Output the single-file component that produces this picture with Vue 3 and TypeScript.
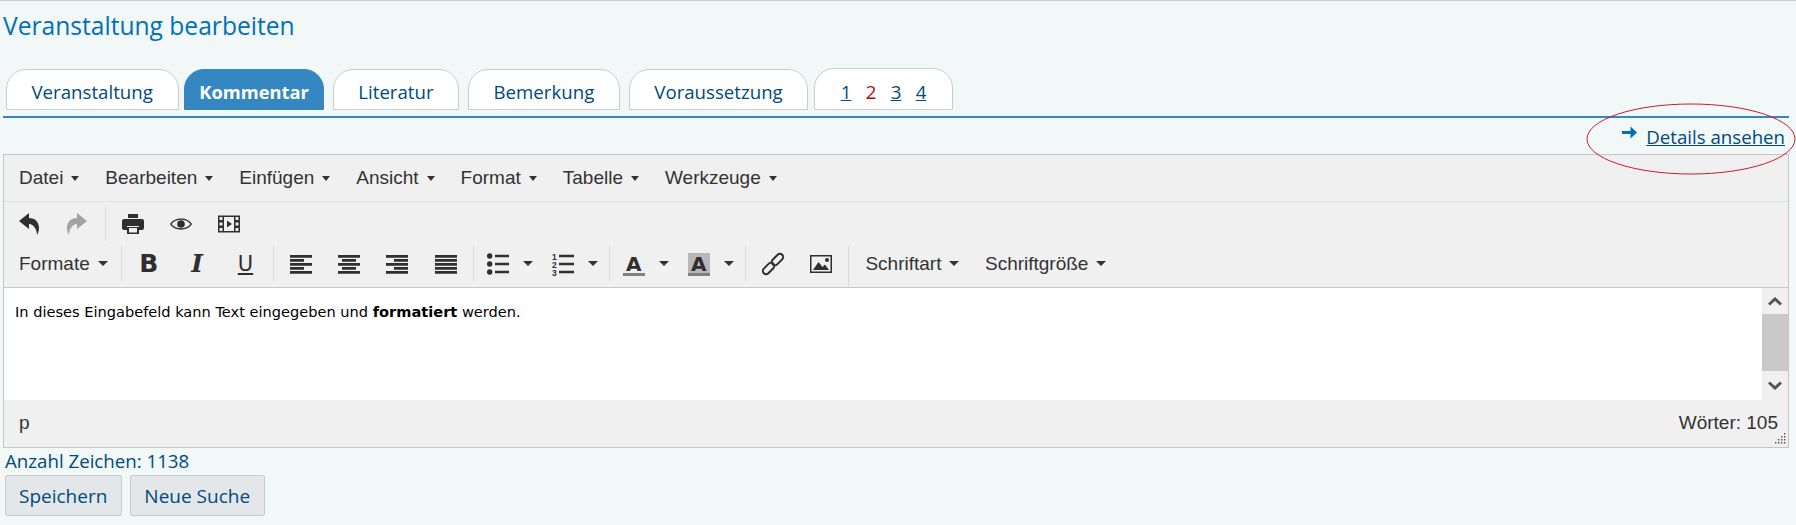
<script setup lang="ts">
type Btn = { icon?: string; glyph?: string; glyphClass?: string; caret?: boolean; label?: string; fill?: string; kind?: string };

const bars = (rows: [number, number][]): string => {
  const top = 2;
  return rows.map(([x, w], i) => `M${x} ${top + i * 4}h${w}v2.8h${-w}z`).join(' ');
};
const lines = (x: number): string => [3, 11, 19].map((y) => `M${x} ${y - 1.3}h${22 - x}v2.6h${x - 22}z`).join(' ');

const paths: Record<string, string> = {
  undo: 'M1 8L11 0V5C17 5 21 9 21 15C21 18 20 20 19 22C19 17 16 11 11 11V16Z',
  redo: 'M21 8L11 0V5C5 5 1 9 1 15C1 18 2 20 3 22C3 17 6 11 11 11V16Z',
  print: 'M6 1h10v4H6z M2 6h18a2 2 0 0 1 2 2v7a2 2 0 0 1-2 2h-3v-4H5v4H2a2 2 0 0 1-2-2V8a2 2 0 0 1 2-2z M5 14h12v7H5z M7 15h8v4.5H7z',
  eye: 'M0 11C4 3.5 18 3.5 22 11C18 18.5 4 18.5 0 11Z M1.6 11C5.5 5.2 16.5 5.2 20.4 11C16.5 16.8 5.5 16.8 1.6 11Z M11 7.2a3.8 3.8 0 1 0 0 7.6a3.8 3.8 0 1 0 0-7.6z',
  film: 'M0 2.5h22v17H0z M1.5 4h3v3h-3z M1.5 9.5h3v3h-3z M1.5 15h3v3h-3z M17.5 4h3v3h-3z M17.5 9.5h3v3h-3z M17.5 15h3v3h-3z M6 4h10v14H6z M9 7.5l5 3.5l-5 3.5z',
  left: bars([[0, 22], [0, 14], [0, 22], [0, 14], [0, 22]]),
  center: bars([[0, 22], [4, 14], [0, 22], [4, 14], [0, 22]]),
  right: bars([[0, 22], [8, 14], [0, 22], [8, 14], [0, 22]]),
  justify: bars([[0, 22], [0, 22], [0, 22], [0, 22], [0, 22]]),
  bullist: 'M2.7 .3a2.7 2.7 0 1 0 0 5.4a2.7 2.7 0 1 0 0-5.4z M2.7 8.3a2.7 2.7 0 1 0 0 5.4a2.7 2.7 0 1 0 0-5.4z M2.7 16.3a2.7 2.7 0 1 0 0 5.4a2.7 2.7 0 1 0 0-5.4z ' + lines(8),
  numlist: lines(7),
  image: 'M0 2h22v18H0z M1.5 3.5h19v15h-19z M3 17l5.5-8l4 5l2.5-2.5l4 5.5z M17 5a2 2 0 1 0 0 4a2 2 0 1 0 0-4z',
};

const menus = ['Datei', 'Bearbeiten', 'Einfügen', 'Ansicht', 'Format', 'Tabelle', 'Werkzeuge'];
const tabs = [
  { label: 'Veranstaltung', cls: 'lead' },
  { label: 'Kommentar', cls: 'active' },
  { label: 'Literatur', cls: 'wide' },
  { label: 'Bemerkung', cls: 'wide' },
  { label: 'Voraussetzung', cls: 'wide' },
];
const pages = [
  { n: '1', red: false },
  { n: '2', red: true },
  { n: '3', red: false },
  { n: '4', red: false },
];

const rowOne: Btn[][] = [
  [{ icon: 'undo' }, { icon: 'redo', fill: 'muted' }],
  [{ icon: 'print' }, { icon: 'eye' }, { icon: 'film' }],
];
const rowTwo: { cls: string; items: Btn[] }[] = [
  { cls: 'first', items: [{ label: 'Formate', caret: true }] },
  { cls: '', items: [
    { glyph: 'B', glyphClass: 'g-bold' },
    { glyph: 'I', glyphClass: 'g-italic' },
    { glyph: 'U', glyphClass: 'g-under' },
  ] },
  { cls: '', items: [{ icon: 'left' }, { icon: 'center' }, { icon: 'right' }, { icon: 'justify' }] },
  { cls: 'split', items: [{ icon: 'bullist', caret: true }, { icon: 'numlist', caret: true, kind: 'nums' }] },
  { cls: 'split', items: [
    { glyph: 'A', glyphClass: 'g-fore', caret: true },
    { glyph: 'A', glyphClass: 'g-back', caret: true },
  ] },
  { cls: '', items: [{ kind: 'link' }, { icon: 'image' }] },
  { cls: 'tall', items: [{ label: 'Schriftart', caret: true }, { label: 'Schriftgröße', caret: true }] },
];
</script>

<template>
  <div class="page">
    <h1 class="title">Veranstaltung bearbeiten</h1>

    <nav class="tabs">
      <a v-for="t in tabs" :key="t.label" class="tab" :class="t.cls">{{ t.label }}</a>
      <div class="tab pages">
        <a v-for="p in pages" :key="p.n" class="num" :class="{ red: p.red }">{{ p.n }}</a>
      </div>
    </nav>

    <div class="details">
      <svg class="arrow" viewBox="0 0 15 13" width="15" height="13">
        <path d="M0 5h8.5V0.5L15 6.5L8.5 12.5V8H0z" />
      </svg>
      <a class="details-link">Details ansehen</a>
      <svg class="ellipse" viewBox="0 0 210 72" width="210" height="72">
        <ellipse cx="105" cy="36" rx="104" ry="35" />
      </svg>
    </div>

    <section class="editor">
      <div class="menubar">
        <span v-for="m in menus" :key="m" class="menu">{{ m }}<i class="caret small" /></span>
      </div>

      <div class="toolbar">
        <div class="row one">
          <div v-for="(g, i) in rowOne" :key="i" class="group">
            <span v-for="b in g" :key="b.icon" class="btn">
              <svg class="ico" :class="b.fill" viewBox="0 0 22 22" width="22" height="22">
                <path fill-rule="evenodd" :d="paths[b.icon as string]" />
              </svg>
            </span>
          </div>
        </div>

        <div class="row two">
          <div v-for="(g, i) in rowTwo" :key="i" class="group" :class="g.cls">
            <span v-for="(b, j) in g.items" :key="j" class="btn" :class="{ 'has-label': b.label, 'has-caret': b.caret && !b.label }">
              <template v-if="b.label">{{ b.label }}</template>

              <span v-else-if="b.glyph" class="glyph" :class="b.glyphClass">{{ b.glyph }}</span>

              <svg v-else-if="b.kind === 'link'" class="ico" viewBox="0 0 22 22" width="22" height="22">
                <g class="chain" transform="rotate(-45 11 11)">
                  <rect x="-2" y="7.8" width="13.5" height="6.4" rx="3.2" />
                  <rect x="10.5" y="7.8" width="13.5" height="6.4" rx="3.2" />
                </g>
              </svg>

              <svg v-else class="ico" viewBox="0 0 22 22" width="22" height="22">
                <path fill-rule="evenodd" :d="paths[b.icon as string]" />
                <template v-if="b.kind === 'nums'">
                  <text class="mini" x="0" y="6.5">1</text>
                  <text class="mini" x="0" y="14.5">2</text>
                  <text class="mini" x="0" y="22.5">3</text>
                </template>
              </svg>

              <i v-if="b.caret" class="caret" />
            </span>
          </div>
        </div>
      </div>

      <div class="body">
        <p class="content">In dieses Eingabefeld kann Text eingegeben und <strong>formatiert</strong> werden.</p>
        <div class="scrollbar">
          <span class="sb-btn top">
            <svg viewBox="0 0 14 9" width="14" height="9"><path d="M1 7.5L7 2l6 5.5" /></svg>
          </span>
          <span class="sb-thumb" />
          <span class="sb-btn">
            <svg viewBox="0 0 14 9" width="14" height="9"><path d="M1 1.5L7 7l6-5.5" /></svg>
          </span>
        </div>
      </div>

      <div class="status">
        <span>p</span>
        <span class="words">Wörter: 105</span>
        <svg class="grip" viewBox="0 0 12 12" width="12" height="12">
          <path d="M10 1h1.4v1.4H10z M10 4h1.4v1.4H10z M7 4h1.4v1.4H7z M10 7h1.4v1.4H10z M7 7h1.4v1.4H7z M4 7h1.4v1.4H4z M10 10h1.4v1.4H10z M7 10h1.4v1.4H7z M4 10h1.4v1.4H4z M1 10h1.4v1.4H1z" />
        </svg>
      </div>
    </section>

    <div class="count">Anzahl Zeichen: 1138</div>
    <div class="actions">
      <button class="action" type="button">Speichern</button>
      <button class="action" type="button">Neue Suche</button>
    </div>
  </div>
</template>

<style>
html, body { margin: 0; background: #f2f7f7; }
</style>

<style scoped>
.page {
  position: relative;
  box-sizing: border-box;
  height: 525px;
  overflow: hidden;
  border-top: 1px solid #cccccc;
  background: #f2f7f7;
  font-family: "Open Sans", sans-serif;
  color: #004a7c;
  padding: 0 7px 0 3px;
}
.title {
  margin: 8px 0 0;
  font-size: 24.6px;
  line-height: 33px;
  font-weight: 400;
  color: #0070b8;
}
.tabs {
  display: flex;
  align-items: flex-end;
  margin-top: 26px;
  padding: 0 0 6px 3px;
  border-bottom: 2px solid #3587c1;
}
.tab {
  box-sizing: border-box;
  height: 41px;
  display: flex;
  align-items: center;
  justify-content: center;
  padding: 4px 24.5px 0;
  margin-left: 5px;
  background: #fff;
  border: 1px solid #cccccc;
  border-radius: 20px 20px 0 0;
  font-size: 18.67px;
  color: #004a7c;
}
.tab.lead { margin-left: 0; padding: 4px 25.5px 0 24.5px; }
.tab.wide { margin-left: 9px; }
.tab.active {
  background: #3587c1;
  border-color: #3587c1;
  color: #fff;
  font-weight: 700;
  font-size: 18.3px;
  padding: 4px 14px 0;
}
.tab.pages {
  height: 42px;
  gap: 14.3px;
  padding: 4px 25.5px 0;
  margin-left: 6px;
}
.num { text-decoration: underline; }
.num.red { color: #cc0000; text-decoration: none; }
.details {
  position: relative;
  height: 36px;
  display: flex;
  align-items: center;
  justify-content: flex-end;
  padding: 1px 4px 0 0;
  box-sizing: border-box;
}
.arrow { fill: #0070b8; margin: -8px 9px 0 0; }
.details-link { font-size: 18.67px; text-decoration: underline; color: #004a7c; }
.ellipse {
  position: absolute;
  top: -15px;
  right: -7px;
  fill: none;
  stroke: #cc1a2e;
  stroke-width: 1;
}
.editor {
  box-sizing: border-box;
  border: 1px solid #c5c5c5;
  background: #f0f0f0;
  font-family: "Liberation Sans", Arial, sans-serif;
  font-size: 19px;
  color: #333;
}
.menubar {
  box-sizing: border-box;
  height: 47px;
  display: flex;
  align-items: center;
  padding: 0 2px;
  border-bottom: 1px solid #e2e4e7;
}
.menu { padding: 0 13px; display: inline-flex; align-items: center; }
.caret {
  display: inline-block;
  width: 0;
  height: 0;
  margin-left: 8px;
  border-left: 5px solid transparent;
  border-right: 5px solid transparent;
  border-top: 5px solid #333;
}
.caret.small { border-left-width: 4.5px; border-right-width: 4.5px; }
.toolbar { padding-top: 4px; border-bottom: 1px solid #c5c5c5; }
.row { display: flex; padding-left: 1px; }
.row.one { height: 37px; }
.row.two { height: 41px; margin-top: 3px; align-items: flex-start; }
.group {
  display: flex;
  align-items: center;
  height: 35px;
  padding: 0 3px;
  border-left: 1px solid #dcdcdc;
}
.group:first-child { border-left: none; padding-left: 0; }
.group.first { padding-right: 0; }
.group.split { padding-right: 2px; }
.group.tall { height: 41px; align-items: flex-start; }
.btn {
  width: 48.3px;
  height: 35px;
  display: inline-flex;
  align-items: center;
  justify-content: center;
  flex: none;
}
.btn.has-label { width: auto; padding: 0 13px; }
.group.first .btn.has-label { padding: 0 13px 0 14px; }
.group.tall .btn.has-label { height: 35px; padding-right: 12.5px; }
.group.split .btn { width: 65px; justify-content: flex-start; padding-left: 10px; box-sizing: border-box; }
.group.split .caret { margin-left: 14px; }
.ico { fill: #2f2f2f; display: block; flex: none; overflow: visible; }
.ico.muted { fill: #a3a3a3; }
.chain rect { fill: none; stroke: #2f2f2f; stroke-width: 2; }
.mini { font: 700 8.5px "Liberation Sans", sans-serif; fill: #2f2f2f; }
.glyph {
  display: inline-flex;
  align-items: center;
  justify-content: center;
  width: 22px;
  height: 22px;
  color: #2f2f2f;
}
.g-bold { font: 700 25px "DejaVu Sans", sans-serif; }
.g-italic { font: italic 700 25px "DejaVu Serif", serif; }
.g-under { font: 400 21px "DejaVu Sans", sans-serif; text-decoration: underline; text-underline-offset: 2px; text-decoration-thickness: 2px; }
.g-fore, .g-back { font: 700 20px "DejaVu Sans", sans-serif; position: relative; }
.g-fore::after, .g-back::after {
  content: "";
  position: absolute;
  left: 0;
  right: 0;
  bottom: -1px;
  height: 3px;
  background: #808080;
}
.g-back { background: #b8b8b8; }
.body {
  display: flex;
  height: 112px;
  background: #fff;
}
.content {
  flex: 1;
  margin: 0;
  padding: 15px 11px;
  font: 14.58px/18px "DejaVu Sans", Verdana, sans-serif;
  color: #000;
}
.scrollbar {
  width: 26px;
  display: flex;
  flex-direction: column;
  background: #f0f0f0;
}
.sb-btn {
  flex: 1;
  display: flex;
  align-items: center;
  justify-content: center;
}
.sb-btn.top { flex: none; height: 26px; }
.sb-btn svg { fill: none; stroke: #555; stroke-width: 3; }
.sb-thumb { height: 57px; background: #c9c9c9; }
.status {
  position: relative;
  box-sizing: border-box;
  height: 47px;
  display: flex;
  align-items: center;
  justify-content: space-between;
  padding: 0 10px 1px 15px;
}
.grip { position: absolute; right: 2px; bottom: 3px; fill: #555; }
.count {
  margin: 1px 0 0 2px;
  font-size: 18.7px;
  line-height: 24px;
}
.actions { display: flex; gap: 8px; margin: 2px 0 0 1.5px; }
.action {
  box-sizing: border-box;
  height: 41px;
  padding: 0 13.5px;
  border: 1px solid #c9cdd0;
  border-radius: 2px;
  background: #e3e7ea;
  color: #004a7c;
  font: 19px "Open Sans", sans-serif;
}
</style>
